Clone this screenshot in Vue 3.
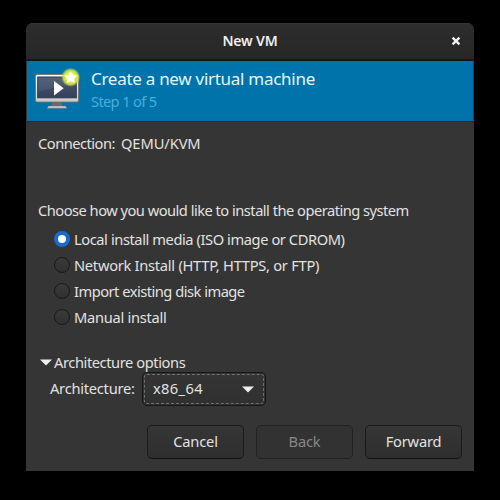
<script setup>
const methods = [
  { label: 'Local install media (ISO image or CDROM)', checked: true, cls: 'local' },
  { label: 'Network Install (HTTP, HTTPS, or FTP)', checked: false, cls: 'network' },
  { label: 'Import existing disk image', checked: false, cls: 'import' },
  { label: 'Manual install', checked: false, cls: 'manual' },
]
</script>

<template>
  <main class="desktop">
    <section class="window">
      <header class="titlebar">
        <h1>New VM</h1>
        <svg class="close" viewBox="0 0 10 10"><path d="M1.6 1.6 8.4 8.4M8.4 1.6 1.6 8.4" /></svg>
      </header>

      <div class="banner">
        <svg class="vm-icon" viewBox="0 0 48 44">
          <defs>
            <linearGradient id="screen" x1="0" y1="0" x2="0" y2="1">
              <stop offset="0" stop-color="#4b5872" />
              <stop offset="1" stop-color="#35415a" />
            </linearGradient>
            <linearGradient id="frame" x1="0" y1="0" x2="0" y2="1">
              <stop offset="0" stop-color="#ffffff" />
              <stop offset="1" stop-color="#c8c8c8" />
            </linearGradient>
            <radialGradient id="glow">
              <stop offset="0.4" stop-color="#f4f766" />
              <stop offset="0.75" stop-color="#d6e83a" stop-opacity="0.85" />
              <stop offset="1" stop-color="#a9d430" stop-opacity="0" />
            </radialGradient>
          </defs>
          <path d="M18.500 36h9l1 4.500h-11z" fill="#6d6a66" />
          <path d="M14.500 40h17l1.500 2.200h-20z" fill="#d5d5cf" stroke="#77706a" stroke-width=".6" />
          <rect x="1.500" y="8.500" width="43" height="27.500" rx="1.500" fill="url(#frame)" stroke="#77706a" stroke-width=".8" />
          <rect x="3.700" y="11" width="38.600" height="20.800" fill="url(#screen)" stroke="#303a4e" />
          <path d="M4.200 11.500h37.600v6Q22 20 4.200 26z" fill="#8997ad" opacity=".15" />
          <path d="M20 15v14.500l9.700-7.250z" fill="#fff" />
          <circle cx="36.700" cy="11.300" r="9.700" fill="url(#glow)" />
          <path d="m36.700 5.300 2 3.900 4.300.6-3.100 3 .8 4.300-4-2-4 2 .8-4.300-3.100-3 4.300-.6z" fill="#fff" />
        </svg>
        <div class="heading">
          <h2>Create a new virtual machine</h2>
          <p>Step 1 of 5</p>
        </div>
      </div>

      <div class="content">
        <p class="connection"><span class="conn-label">Connection:</span><span class="conn-value">QEMU/KVM</span></p>
        <p class="prompt">Choose how you would like to install the operating system</p>
        <div class="methods">
          <div v-for="m in methods" :key="m.label" class="method">
            <span class="radio" :class="{ checked: m.checked }"></span>
            <span :class="m.cls">{{ m.label }}</span>
          </div>
        </div>
        <div class="expander">
          <svg viewBox="0 0 12 7"><path d="M0 .5h12L6 6.500z" /></svg>
          <span>Architecture options</span>
        </div>
        <div class="architecture">
          <span class="arch-label">Architecture:</span>
          <div class="combo">
            <span>x86_64</span>
            <svg viewBox="0 0 12 7"><path d="M0 .5h12L6 6.500z" /></svg>
          </div>
        </div>
      </div>

      <footer class="actions">
        <button class="cancel">Cancel</button>
        <button class="back" disabled>Back</button>
        <button class="forward">Forward</button>
      </footer>
    </section>
  </main>
</template>

<style>
body { margin: 0; background: #000; }
</style>

<style scoped>
* { box-sizing: border-box; }
h1, h2, p { margin: 0; font-weight: 400; }
.desktop {
  width: 500px; height: 500px; padding: 23px 26px 29px; background: #000;
  font: 14.670px/20px "Noto Sans", sans-serif; color: #e2e2e0; white-space: nowrap;
}
.window {
  height: 448px; display: flex; flex-direction: column; background: #353535;
  border-radius: 7px 7px 0 0; overflow: hidden;
}
.titlebar {
  height: 38px; flex: none; display: grid; grid-template-columns: 1fr auto 1fr; align-items: center;
  background: linear-gradient(#2d2d2d, #272727); border-bottom: 2px solid #151819; box-shadow: inset 0 1px #363636;
}
h1 { grid-column: 2; font-size: 14px; font-weight: 600; letter-spacing: -.15px; color: #eee; }
.close { width: 10px; height: 10px; justify-self: end; margin-right: 13px; fill: none; stroke: #f2f2f2; stroke-width: 2.300; }
.banner {
  height: 61px; flex: none; display: flex; margin: 0 1px; background: #0073ab;
  border-bottom: 1px solid #122b38; padding: 5px 0 0 7px;
}
.vm-icon { width: 48px; height: 44px; flex: none; }
.heading { padding: 1px 0 0 9px; }
h2 { font-size: 17px; line-height: 24px; letter-spacing: -.28px; color: #e2f8ff; }
.heading p { line-height: 20px; letter-spacing: -.66px; color: #48addd; }
.content { padding: 11px 12px 0; flex: 1; }
.connection { display: flex; }
.conn-label { width: 83px; letter-spacing: -.5px; }
.conn-value { letter-spacing: -.08px; }
.prompt { margin-top: 47px; letter-spacing: -.51px; }
.methods { padding: 6px 0 0 16px; }
.method { height: 26px; display: flex; align-items: center; gap: 4px; }
.local { letter-spacing: -.42px; }
.network { letter-spacing: -.27px; }
.import { letter-spacing: -.5px; }
.manual { letter-spacing: -.28px; }
.radio { width: 16px; height: 16px; border: 1.500px solid #191919; border-radius: 50%; background: linear-gradient(#3a3a3a, #303030); }
.radio.checked { border: 4px solid #1b6acb; background: #fff; }
.expander { display: flex; align-items: center; gap: 2px; margin-top: 22px; padding-left: 2px; letter-spacing: -.42px; }
.expander svg, .combo svg { width: 12px; height: 7px; fill: #f0f0ee; }
.architecture { display: flex; align-items: center; gap: 7px; height: 34px; padding-left: 12px; }
.arch-label { width: 85px; padding-bottom: 2px; letter-spacing: -.25px; }
.combo {
  width: 124px; height: 34px; display: flex; align-items: center; justify-content: space-between;
  padding: 0 11px 0 10px; border: 1px solid #171717; border-radius: 5px; background: linear-gradient(#353535, #303030);
  outline: 1px dashed #707070; outline-offset: -3px; letter-spacing: .35px;
}
.combo span { padding-bottom: 2px; }
.actions { display: flex; gap: 12px; height: 46px; padding-left: 121px; flex: none; }
button {
  width: 97px; height: 34px; padding: 0 0 2px; font: inherit; letter-spacing: -.2px; color: #e2e2e0;
  border: 1px solid #1b1b1b; border-bottom-color: #111; border-radius: 5px; background: linear-gradient(#363636, #2e2e2e);
}
.back { color: #888886; border-color: #222; background: #323232; }
</style>
